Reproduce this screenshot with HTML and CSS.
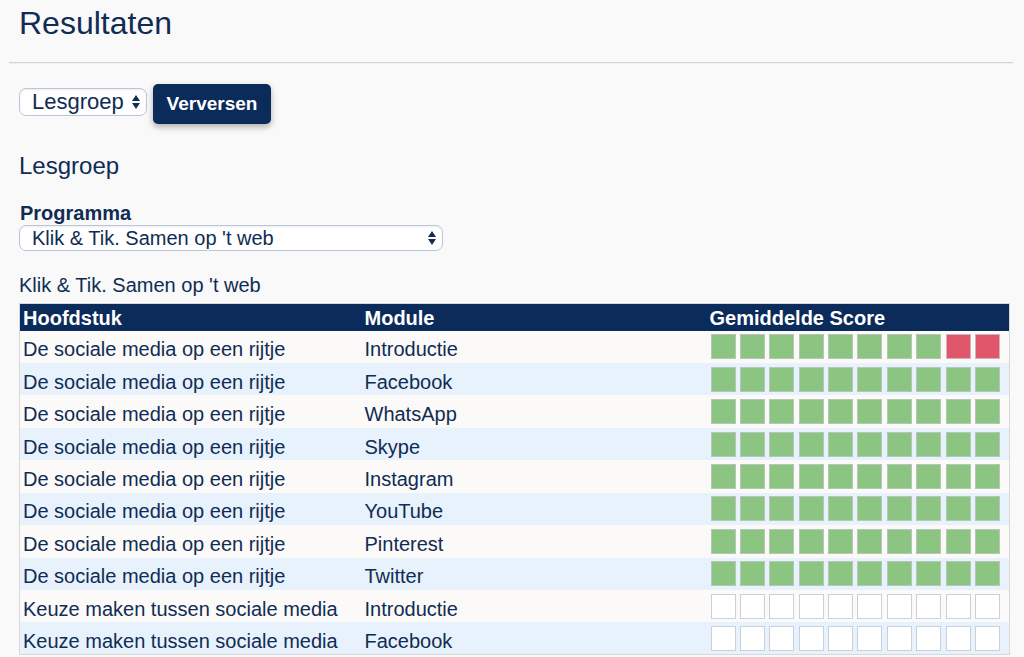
FILE: index.html
```html
<!DOCTYPE html>
<html lang="nl">
<head>
<meta charset="utf-8">
<title>Resultaten</title>
<link rel="stylesheet" href="styles.css">
</head>
<body>
<div class="page">
  <h1 class="title">Resultaten</h1>
  <hr class="rule">
  <div class="toolbar">
    <div class="select select-group">
      <span class="select-text">Lesgroep</span>
      <svg class="arrows" width="10" height="16" viewBox="0 0 10 16"><polygon points="1,7 5,1 9,7" fill="#102c54"/><polygon points="1,9 9,9 5,15" fill="#102c54"/></svg>
    </div>
    <button class="btn">Verversen</button>
  </div>
  <h2 class="subtitle">Lesgroep</h2>
  <label class="field-label">Programma</label>
  <div class="select select-program">
    <span class="select-text">Klik &amp; Tik. Samen op 't web</span>
    <svg class="arrows" width="10" height="16" viewBox="0 0 10 16"><polygon points="1,7 5,1 9,7" fill="#102c54"/><polygon points="1,9 9,9 5,15" fill="#102c54"/></svg>
  </div>
  <div class="caption">Klik &amp; Tik. Samen op 't web</div>
  <table class="results">
    <colgroup><col class="c1"><col class="c2"><col class="c3"></colgroup>
    <thead>
      <tr><th>Hoofdstuk</th><th>Module</th><th>Gemiddelde Score</th></tr>
    </thead>
    <tbody>
      <tr><td>De sociale media op een rijtje</td><td>Introductie</td><td class="sc"><div class="score"><i class="g"></i><i class="g"></i><i class="g"></i><i class="g"></i><i class="g"></i><i class="g"></i><i class="g"></i><i class="g"></i><i class="r"></i><i class="r"></i></div></td></tr>
      <tr><td>De sociale media op een rijtje</td><td>Facebook</td><td class="sc"><div class="score"><i class="g"></i><i class="g"></i><i class="g"></i><i class="g"></i><i class="g"></i><i class="g"></i><i class="g"></i><i class="g"></i><i class="g"></i><i class="g"></i></div></td></tr>
      <tr><td>De sociale media op een rijtje</td><td>WhatsApp</td><td class="sc"><div class="score"><i class="g"></i><i class="g"></i><i class="g"></i><i class="g"></i><i class="g"></i><i class="g"></i><i class="g"></i><i class="g"></i><i class="g"></i><i class="g"></i></div></td></tr>
      <tr><td>De sociale media op een rijtje</td><td>Skype</td><td class="sc"><div class="score"><i class="g"></i><i class="g"></i><i class="g"></i><i class="g"></i><i class="g"></i><i class="g"></i><i class="g"></i><i class="g"></i><i class="g"></i><i class="g"></i></div></td></tr>
      <tr><td>De sociale media op een rijtje</td><td>Instagram</td><td class="sc"><div class="score"><i class="g"></i><i class="g"></i><i class="g"></i><i class="g"></i><i class="g"></i><i class="g"></i><i class="g"></i><i class="g"></i><i class="g"></i><i class="g"></i></div></td></tr>
      <tr><td>De sociale media op een rijtje</td><td>YouTube</td><td class="sc"><div class="score"><i class="g"></i><i class="g"></i><i class="g"></i><i class="g"></i><i class="g"></i><i class="g"></i><i class="g"></i><i class="g"></i><i class="g"></i><i class="g"></i></div></td></tr>
      <tr><td>De sociale media op een rijtje</td><td>Pinterest</td><td class="sc"><div class="score"><i class="g"></i><i class="g"></i><i class="g"></i><i class="g"></i><i class="g"></i><i class="g"></i><i class="g"></i><i class="g"></i><i class="g"></i><i class="g"></i></div></td></tr>
      <tr><td>De sociale media op een rijtje</td><td>Twitter</td><td class="sc"><div class="score"><i class="g"></i><i class="g"></i><i class="g"></i><i class="g"></i><i class="g"></i><i class="g"></i><i class="g"></i><i class="g"></i><i class="g"></i><i class="g"></i></div></td></tr>
      <tr><td>Keuze maken tussen sociale media</td><td>Introductie</td><td class="sc"><div class="score"><i></i><i></i><i></i><i></i><i></i><i></i><i></i><i></i><i></i><i></i></div></td></tr>
      <tr><td>Keuze maken tussen sociale media</td><td>Facebook</td><td class="sc"><div class="score"><i></i><i></i><i></i><i></i><i></i><i></i><i></i><i></i><i></i><i></i></div></td></tr>
    </tbody>
  </table>
</div>
</body>
</html>
```

FILE: styles.css
```css
html, body {
  margin: 0;
  padding: 0;
  background: #f9f9f9;
}
body {
  font-family: "Liberation Sans", Arial, Helvetica, sans-serif;
  color: #102c54;
  font-size: 20px;
}
.page {
  padding: 5px 15px 0 19px;
}
.title {
  margin: 0;
  font-size: 32px;
  font-weight: normal;
  line-height: 37px;
}
.rule {
  margin: 20px 0 0 -10px;
  width: 1004px;
  border: 0;
  border-top: 1px solid #d4d4d4;
  border-bottom: 1px solid #efefef;
  height: 0;
}
.toolbar {
  display: flex;
  align-items: flex-start;
  gap: 6px;
  margin-top: 20px;
}
.select {
  display: flex;
  align-items: center;
  justify-content: space-between;
  box-sizing: border-box;
  background: #fff;
  border: 1px solid #bac6da;
  border-radius: 7px;
  box-shadow: inset 0 1px 2px rgba(0,0,0,0.08);
  padding: 0 5px 0 12px;
}
.select-text {
  white-space: nowrap;
}
.select-group {
  margin-top: 4px;
  width: 128px;
  height: 28px;
  font-size: 22px;
  padding-left: 12px;
}
.select-program {
  width: 424px;
  height: 26px;
  padding-right: 5px;
}
.arrows {
  display: block;
  flex: none;
}
.btn {
  width: 118px;
  height: 40px;
  border: 0;
  border-radius: 5px;
  background: #0b2b5b;
  color: #fff;
  font-family: "Liberation Sans", Arial, sans-serif;
  font-weight: bold;
  font-size: 19px;
  padding: 0;
  box-shadow: 0 3px 6px rgba(0,0,0,0.3);
}
.subtitle {
  margin: 28px 0 0;
  font-size: 24px;
  font-weight: normal;
  line-height: 28px;
}
.field-label {
  display: block;
  margin-top: 22px;
  font-weight: bold;
  line-height: 23px;
  padding-left: 1px;
}
.caption {
  margin-top: 23px;
  line-height: 23px;
}
.results {
  margin-top: 6px;
  width: 990px;
  border-collapse: collapse;
  border: 1px solid #d8d8d8;
  table-layout: fixed;
}
.c1 { width: 342px; }
.c2 { width: 345px; }
.c3 { width: 303px; }
.results th {
  background: #0b2b5b;
  color: #fff;
  text-align: left;
  font-weight: bold;
  height: 27px;
  padding: 3px 3px 0;
  line-height: 23px;
  box-sizing: border-box;
}
.results td {
  height: 32.45px;
  padding: 6px 3px 0;
  line-height: 23px;
  white-space: nowrap;
  box-sizing: border-box;
}
.results td.sc {
  padding: 0 3px 0 4px;
}
.results tbody tr:nth-child(odd) { background: #fbfaf8; }
.results tbody tr:nth-child(even) { background: #e7f2fc; }
.score {
  display: flex;
  gap: 4.4px;
}
.score i {
  display: block;
  width: 25px;
  height: 25px;
  box-sizing: border-box;
  border: 1px solid #c9d0dc;
  background: #fff;
}
.score i.g {
  background: #8cc481;
  border-color: #b5c7b8;
}
.score i.r {
  background: #e0566a;
  border-color: #d6b3bb;
}
```
